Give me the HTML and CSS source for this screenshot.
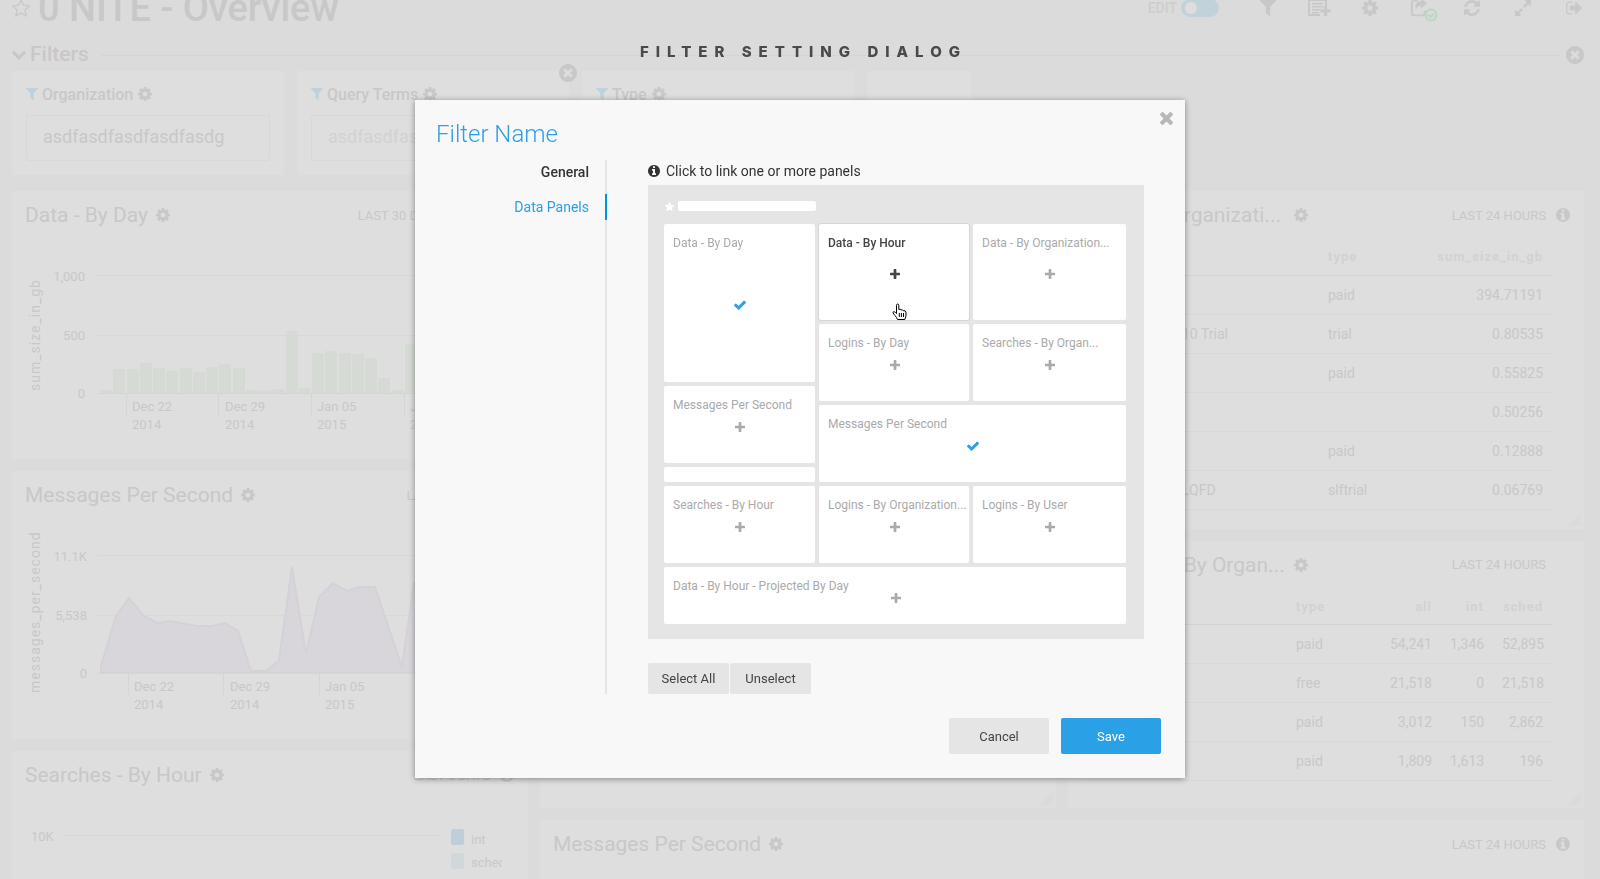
FILE: index.html
```html
<!DOCTYPE html>
<html lang="en">
<head>
  <meta charset="UTF-8" />
  <meta name="viewport" content="width=device-width, initial-scale=1.0"/>
  <title>0 NITE - Overview</title>
  <link rel="stylesheet" href="styles.css">
</head>
<body>

<!-- Icon set -->
<svg class="icon-defs" aria-hidden="true">
  <symbol id="cog" viewBox="0 128 1536 1536"><path d="M1024 896q0-106-75-181t-181-75-181 75-75 181 75 181 181 75 181-75 75-181zm512-109v222q0 12-8 23t-20 13l-185 28q-19 54-39 91 35 50 107 138 10 12 10 25t-9 23q-27 37-99 108t-94 71q-12 0-26-9l-138-108q-44 23-91 38-16 136-29 186-7 28-36 28h-222q-14 0-24.500-8.500t-11.500-21.500l-28-184q-49-16-90-37l-141 107q-10 9-25 9-14 0-25-11-126-114-165-168-7-10-7-23 0-12 8-23 15-21 51-66.500t54-70.500q-27-50-41-99l-183-27q-13-2-21-12.500t-8-23.500v-222q0-12 8-23t19-13l186-28q14-46 39-92-40-57-107-138-10-12-10-24 0-10 9-23 26-36 98.500-107.500t94.500-71.500q13 0 26 10l138 107q44-23 91-38 16-136 29-186 7-28 36-28h222q14 0 24.500 8.500t11.500 21.500l28 184q49 16 90 37l142-107q9-9 24-9 13 0 25 10 129 119 165 170 7 8 7 22 0 12-8 23-15 21-51 66.500t-54 70.500q26 50 41 98l183 28q13 2 21 12.500t8 23.500z"/></symbol>
  <symbol id="plus" viewBox="192 128 1408 1408"><path d="M1600 736v192q0 40-28 68t-68 28h-416v416q0 40-28 68t-68 28h-192q-40 0-68-28t-28-68v-416h-416q-40 0-68-28t-28-68v-192q0-40 28-68t68-28h416v-416q0-40 28-68t68-28h192q40 0 68 28t28 68v416h416q40 0 68 28t28 68z"/></symbol>
  <symbol id="check" viewBox="121 120 1550 1550"><path d="M1671 566q0 40-28 68l-724 724-136 136q-28 28-68 28t-68-28l-136-136-362-362q-28-28-28-68t28-68l136-136q28-28 68-28t68 28l294 295 656-657q28-28 68-28t68 28l136 136q28 28 28 68z"/></symbol>
  <symbol id="times" viewBox="302 366 1188 1188"><path d="M1490 1322q0 40-28 68l-136 136q-28 28-68 28t-68-28l-294-294-294 294q-28 28-68 28t-68-28l-136-136q-28-28-28-68t28-68l294-294-294-294q-28-28-28-68t28-68l136-136q28-28 68-28t68 28l294 294 294-294q28-28 68-28t68 28l136 136q28 28 28 68t-28 68l-294 294 294 294q28 28 28 68z"/></symbol>
  <symbol id="info" viewBox="128 128 1536 1536"><path d="M1152 1376v-160q0-14-9-23t-23-9h-96v-512q0-14-9-23t-23-9h-320q-14 0-23 9t-9 23v160q0 14 9 23t23 9h96v320h-96q-14 0-23 9t-9 23v160q0 14 9 23t23 9h448q14 0 23-9t9-23zm-128-896v-160q0-14-9-23t-23-9h-192q-14 0-23 9t-9 23v160q0 14 9 23t23 9h192q14 0 23-9t9-23zm640 416q0 209-103 385.500t-279.500 279.500-385.500 103-385.500-103-279.500-279.500-103-385.500 103-385.500 279.500-279.500 385.500-103 385.500 103 279.500 279.500 103 385.500z"/></symbol>
  <symbol id="times-circle" viewBox="128 128 1536 1536"><path d="M1277 1122q0-26-19-45l-181-181 181-181q19-19 19-45 0-27-19-46l-90-90q-19-19-46-19-26 0-45 19l-181 181-181-181q-19-19-45-19-27 0-46 19l-90 90q-19 19-19 46 0 26 19 45l181 181-181 181q-19 19-19 45 0 27 19 46l90 90q19 19 46 19 26 0 45-19l181-181 181 181q19 19 45 19 27 0 46-19l90-90q19-19 19-46zm387-226q0 209-103 385.500t-279.500 279.500-385.500 103-385.500-103-279.500-279.500-103-385.500 103-385.500 279.500-279.500 385.500-103 385.500 103 279.500 279.500 103 385.500z"/></symbol>
  <symbol id="filter" viewBox="192 256 1408 1408"><path d="M1595 295q17 41-14 70l-493 493v742q0 42-39 59-13 5-25 5-27 0-45-19l-256-256q-19-19-19-45v-486l-493-493q-31-29-14-70 17-39 59-39h1280q42 0 59 39z"/></symbol>
  <symbol id="chevron" viewBox="90 210 1612 1612"><path d="M1683 808l-742 741q-19 19-45 19t-45-19l-742-741q-19-19-19-45.500t19-45.500l166-165q19-19 45-19t45 19l531 531 531-531q19-19 45-19t45 19l166 165q19 19 19 45.500t-19 45.500z"/></symbol>
  <symbol id="refresh" viewBox="128 128 1536 1536"><path d="M1639 1056q0 5-1 7-64 268-268 434.500t-478 166.500q-146 0-282.500-55t-243.500-157l-129 129q-19 19-45 19t-45-19-19-45v-448q0-26 19-45t45-19h448q26 0 45 19t19 45-19 45l-137 137q71 66 161 102t187 36q134 0 250-65t186-179q11-17 53-117 8-23 30-23h192q13 0 22.500 9.500t9.500 22.500zm25-800v448q0 26-19 45t-45 19h-448q-26 0-45-19t-19-45 19-45l138-138q-148-137-349-137-134 0-250 65t-186 179q-11 17-53 117-8 23-30 23h-199q-13 0-22.500-9.500t-9.500-22.500v-7q65-268 270-434.500t480-166.500q146 0 284 55.500t245 156.500l130-129q19-19 45-19t45 19 19 45z"/></symbol>
  <symbol id="expand" viewBox="128 128 1536 1536"><path d="M883 1056q0 13-10 23l-332 332 144 144q19 19 19 45t-19 45-45 19h-448q-26 0-45-19t-19-45v-448q0-26 19-45t45-19 45 19l144 144 332-332q10-10 23-10t23 10l114 114q10 10 10 23zm781-864v448q0 26-19 45t-45 19-45-19l-144-144-332 332q-10 10-23 10t-23-10l-114-114q-10-10-10-23t10-23l332-332-144-144q-19-19-19-45t19-45 45-19h448q26 0 45 19t19 45z"/></symbol>
  <symbol id="sign-out" viewBox="64 112 1568 1568"><path d="M704 1440q0 4 1 20t.5 26.500-3 23.500-10 19.500-20.500 6.500h-320q-119 0-203.500-84.500t-84.500-203.500v-704q0-119 84.500-203.500t203.500-84.500h320q13 0 22.500 9.500t9.500 22.500q0 4 1 20t.5 26.500-3 23.500-10 19.500-20.500 6.500h-320q-66 0-113 47t-47 113v704q0 66 47 113t113 47h312l11.500 1 11.500 3 8 5.500 7 9 2 13.500zm928-544q0 26-19 45l-544 544q-19 19-45 19t-45-19-19-45v-288h-448q-26 0-45-19t-19-45v-384q0-26 19-45t45-19h448v-288q0-26 19-45t45-19 45 19l544 544q19 19 19 45z"/></symbol>
  <symbol id="star" viewBox="0 0 20 20"><path d="M10 1l2.800 5.900 6.300.9-4.600 4.500 1.200 6.400L10 15.600l-5.700 3.100 1.200-6.400L.9 7.800l6.300-.9z"/></symbol>
  <symbol id="share" viewBox="0 0 24 24"><path d="M9 4H4.500Q2 4 2 6.500v11Q2 20 4.500 20h9q2.500 0 2.500-2.500V15" fill="none" stroke="currentColor" stroke-width="2"/><path d="M12 1.500L18.500 7 12 12.500V9.500q-5 0-5.500 5Q4 5 12 4.500z"/></symbol>
  <symbol id="add-list" viewBox="0 0 24 20"><path d="M13 17H2V2h17v7" fill="none" stroke="currentColor" stroke-width="2"/><path d="M5 5h11v1.500H5zM5 8h11v1.500H5zM5 11h9v1.500H5zM5 14h7v1.500H5zM17 8h3v3.500h3.500v3H20V18h-3v-3.500h-3.500v-3H17z"/></symbol>
  <symbol id="grip" viewBox="0 0 14 14"><path d="M1 13L13 1M5 13l8-8M9 13l4-4" fill="none" stroke="currentColor" stroke-width="1.500"/></symbol>
</svg>

<!-- Dashboard -->
<div class="dashboard">
  <header class="topbar">
    <svg class="icon star-outline"><use href="#star"/></svg>
    <h1>0 NITE - Overview</h1>
    <label class="edit-label" for="edit">EDIT</label>
    <input class="toggle" type="checkbox" id="edit">
    <nav class="tools">
      <button class="tool" aria-label="Filter"><svg class="icon icon-16"><use href="#filter"/></svg></button>
      <button class="tool" aria-label="Add panel"><svg class="icon icon-add"><use href="#add-list"/></svg></button>
      <button class="tool" aria-label="Settings"><svg class="icon icon-16"><use href="#cog"/></svg></button>
      <button class="tool" aria-label="Share">
        <svg class="icon icon-share"><use href="#share"/></svg>
        <svg class="share-ok" viewBox="0 0 14 14"><circle cx="7" cy="7" r="5.500"/><path d="M4 6.500l2.500 2.500L10 5.500"/></svg>
      </button>
      <button class="tool" aria-label="Refresh"><svg class="icon icon-16"><use href="#refresh"/></svg></button>
      <button class="tool" aria-label="Full screen"><svg class="icon icon-16"><use href="#expand"/></svg></button>
      <button class="tool" aria-label="Sign out"><svg class="icon icon-16"><use href="#sign-out"/></svg></button>
    </nav>
  </header>

  <div class="filters-head">
    <svg class="icon icon-14"><use href="#chevron"/></svg>
    <h2>Filters</h2>
    <span class="rule"></span>
    <button class="plain" aria-label="Close filters"><svg class="icon icon-18"><use href="#times-circle"/></svg></button>
  </div>

  <div class="filters">
    <div class="filter-card">
      <label for="organization"><svg class="icon icon-12 blue"><use href="#filter"/></svg>Organization<svg class="icon icon-14"><use href="#cog"/></svg></label>
      <input type="text" id="organization" value="asdfasdfasdfasdfasdg">
    </div>
    <div class="filter-card">
      <label for="terms"><svg class="icon icon-12 blue"><use href="#filter"/></svg>Query Terms<svg class="icon icon-14"><use href="#cog"/></svg></label>
      <input type="text" id="terms" placeholder="asdfasdfasdfasdfasdg">
      <button class="plain remove" aria-label="Remove filter"><svg class="icon icon-18"><use href="#times-circle"/></svg></button>
    </div>
    <div class="filter-card">
      <label for="type"><svg class="icon icon-12 blue"><use href="#filter"/></svg>Type<svg class="icon icon-14"><use href="#cog"/></svg></label>
      <input type="text" id="type">
    </div>
    <div class="filter-card small"></div>
  </div>

  <main class="board">
    <div class="column">
      <section class="card">
        <div class="card-head">
          <h3>Data - By Day</h3>
          <svg class="icon icon-14"><use href="#cog"/></svg>
          <span class="range">LAST 30 DAYS, BY DAY</span>
          <svg class="icon icon-14"><use href="#info"/></svg>
        </div>
        <svg class="chart">
          <path class="grid-line" d="M85 34.500H504M85 94.500H504"/>
          <g class="bars">
            <rect x="88" y="149" width="12" height="3"/><rect x="101" y="128" width="12" height="24"/>
            <rect x="115" y="128" width="12" height="24"/><rect x="128" y="122" width="12" height="30"/>
            <rect x="141" y="127" width="12" height="25"/><rect x="154" y="130" width="12" height="22"/>
            <rect x="168" y="127" width="12" height="25"/><rect x="181" y="131" width="12" height="21"/>
            <rect x="194" y="126" width="12" height="26"/><rect x="207" y="123" width="12" height="29"/>
            <rect x="221" y="127" width="12" height="25"/><rect x="234" y="149" width="12" height="3"/>
            <rect x="247" y="149" width="12" height="3"/><rect x="260" y="148" width="12" height="4"/>
            <rect x="274" y="90" width="12" height="62"/><rect x="287" y="147" width="12" height="5"/>
            <rect x="300" y="112" width="12" height="40"/><rect x="313" y="110" width="12" height="42"/>
            <rect x="327" y="112" width="12" height="40"/><rect x="340" y="113" width="12" height="39"/>
            <rect x="353" y="117" width="12" height="35"/><rect x="366" y="137" width="12" height="15"/>
            <rect x="380" y="149" width="12" height="3"/><rect x="393" y="103" width="12" height="49"/>
          </g>
          <path class="axis-line" d="M85 152.500H504M114.500 152V175M206.500 152V175M299.500 152V175M392.500 152V175"/>
          <g class="y-labels"><text x="73" y="40">1,000</text><text x="73" y="99">500</text><text x="73" y="157">0</text></g>
          <text x="120" y="170">Dec 22</text><text x="120" y="188">2014</text>
          <text x="213" y="170">Dec 29</text><text x="213" y="188">2014</text>
          <text x="305" y="170">Jan 05</text><text x="305" y="188">2015</text>
          <text x="398" y="170">Jan 12</text><text x="398" y="188">2015</text>
          <text class="axis-title" transform="translate(28 150) rotate(-90)">sum_size_in_gb</text>
        </svg>
      </section>

      <section class="card">
        <div class="card-head">
          <h3>Messages Per Second</h3>
          <svg class="icon icon-14"><use href="#cog"/></svg>
          <span class="range">LAST 30 DAYS</span>
          <svg class="icon icon-14"><use href="#info"/></svg>
        </div>
        <svg class="chart">
          <path class="grid-line" d="M86 34.500H504M86 94.500H504"/>
          <path class="area" d="M89 152V145L104 95 117 77 131 94 145 102 158 100 185 105H200L213 102 226 110 239 150H254L267 139 280 46 294 133 307 76 321 62 335 70 347 66H363L376 105 390 146 402 62 416 60V152z"/>
          <path class="axis-line" d="M86 152.500H504M116.500 152V175M211.500 152V175M307.500 152V175"/>
          <g class="y-labels"><text x="75" y="40">11.1K</text><text x="75" y="99">5,538</text><text x="75" y="157">0</text></g>
          <text x="122" y="170">Dec 22</text><text x="122" y="188">2014</text>
          <text x="218" y="170">Dec 29</text><text x="218" y="188">2014</text>
          <text x="313" y="170">Jan 05</text><text x="313" y="188">2015</text>
          <text class="axis-title" transform="translate(28 172) rotate(-90)">messages_per_second</text>
        </svg>
      </section>

      <section class="card">
        <div class="card-head">
          <h3>Searches - By Hour</h3>
          <svg class="icon icon-14"><use href="#cog"/></svg>
          <span class="range">LAST 5 DAYS</span>
          <svg class="icon icon-14"><use href="#info"/></svg>
        </div>
        <svg class="chart">
          <text x="19" y="40">10K</text>
          <path class="grid-line" d="M53 34.500H429"/>
          <rect class="key-int" x="439" y="28" width="13" height="16" rx="2"/>
          <rect class="key-sched" x="439" y="52" width="13" height="16" rx="2"/>
          <text x="459" y="43">int</text>
          <svg x="459" y="50" width="31" height="22"><text x="0" y="16">sched</text></svg>
        </svg>
      </section>
    </div>

    <div class="wide">
      <section class="card middle">
        <svg class="grip"><use href="#grip"/></svg>
      </section>

      <div class="column">
        <section class="card">
          <div class="card-head">
            <h3 class="fill">Data - By Organizati...</h3>
            <svg class="icon icon-14"><use href="#cog"/></svg>
            <span class="range">LAST 24 HOURS</span>
            <svg class="icon icon-14"><use href="#info"/></svg>
          </div>
          <table>
            <colgroup><col><col class="c-type"><col class="c-size"></colgroup>
            <tr><th></th><th>type</th><th class="num">sum_size_in_gb</th></tr>
            <tr><td></td><td>paid</td><td class="num">394.71191</td></tr>
            <tr><td class="name">10 Trial</td><td>trial</td><td class="num">0.80535</td></tr>
            <tr><td></td><td>paid</td><td class="num">0.55825</td></tr>
            <tr><td></td><td></td><td class="num">0.50256</td></tr>
            <tr><td></td><td>paid</td><td class="num">0.12888</td></tr>
            <tr><td class="name">LQFD</td><td>slftrial</td><td class="num">0.06769</td></tr>
          </table>
          <svg class="grip"><use href="#grip"/></svg>
        </section>

        <section class="card grow">
          <div class="card-head">
            <h3 class="fill">Searches - By Organ...</h3>
            <svg class="icon icon-14"><use href="#cog"/></svg>
            <span class="range">LAST 24 HOURS</span>
            <span class="no-icon"></span>
          </div>
          <table>
            <colgroup><col><col class="c-kind"><col class="c-all"><col class="c-int"><col class="c-sched"></colgroup>
            <tr><th></th><th>type</th><th class="num">all</th><th class="num">int</th><th class="num">sched</th></tr>
            <tr><td></td><td>paid</td><td class="num">54,241</td><td class="num">1,346</td><td class="num">52,895</td></tr>
            <tr><td></td><td>free</td><td class="num">21,518</td><td class="num">0</td><td class="num">21,518</td></tr>
            <tr><td></td><td>paid</td><td class="num">3,012</td><td class="num">150</td><td class="num">2,862</td></tr>
            <tr><td></td><td>paid</td><td class="num">1,809</td><td class="num">1,613</td><td class="num">196</td></tr>
          </table>
          <svg class="grip"><use href="#grip"/></svg>
        </section>
      </div>

      <section class="card bottom">
        <div class="card-head">
          <h3>Messages Per Second</h3>
          <svg class="icon icon-14"><use href="#cog"/></svg>
          <span class="range">LAST 24 HOURS</span>
          <svg class="icon icon-14"><use href="#info"/></svg>
        </div>
      </section>
    </div>
  </main>
</div>

<!-- Filter dialog -->
<div class="overlay">
  <p class="caption">FILTER SETTING DIALOG</p>
  <div class="dialog" role="dialog" aria-labelledby="dialog-title">
    <header class="dialog-head">
      <h2 id="dialog-title">Filter Name</h2>
      <button class="plain close" aria-label="Close"><svg class="icon icon-13"><use href="#times"/></svg></button>
    </header>

    <div class="dialog-body">
      <nav class="tabs">
        <a href="#general">General</a>
        <a href="#panels" class="active">Data Panels</a>
      </nav>

      <div class="content">
        <p class="hint"><svg class="icon icon-12"><use href="#info"/></svg>Click to link one or more panels</p>

        <div class="map">
          <div class="map-title"><svg class="icon icon-11"><use href="#star"/></svg><span></span></div>
          <div class="tiles">
            <div class="stack">
              <button class="tile linked"><span>Data - By Day</span><svg class="icon icon-12"><use href="#check"/></svg></button>
              <button class="tile"><span>Messages Per Second</span><svg class="icon icon-10"><use href="#plus"/></svg></button>
              <div class="tile"></div>
            </div>
            <div class="tiles-right">
              <button class="tile hover"><span>Data - By Hour</span><svg class="icon icon-10"><use href="#plus"/></svg>
                <svg class="pointer" viewBox="0 0 16 18">
                  <path d="M5.500 16.500C4.500 13.500 1.500 11.500 1 9.500 1 8.300 2.500 8.200 4.500 10.500V2.500Q4.500 1 5.600 1 6.800 1 6.800 2.500V6.500Q8.500 5.800 9 7 10.700 6.300 11.200 7.700 13.500 7.200 14 9V12Q14 14 12.800 16.500z"/>
                  <path d="M7.300 10v4M9.400 10v4M11.500 10v4"/>
                </svg>
              </button>
              <button class="tile"><span>Data - By Organization...</span><svg class="icon icon-10"><use href="#plus"/></svg></button>
              <button class="tile"><span>Logins - By Day</span><svg class="icon icon-10"><use href="#plus"/></svg></button>
              <button class="tile"><span>Searches - By Organ...</span><svg class="icon icon-10"><use href="#plus"/></svg></button>
              <button class="tile linked span-2"><span>Messages Per Second</span><svg class="icon icon-12"><use href="#check"/></svg></button>
            </div>
            <button class="tile"><span>Searches - By Hour</span><svg class="icon icon-10"><use href="#plus"/></svg></button>
            <button class="tile"><span>Logins - By Organization...</span><svg class="icon icon-10"><use href="#plus"/></svg></button>
            <button class="tile"><span>Logins - By User</span><svg class="icon icon-10"><use href="#plus"/></svg></button>
            <button class="tile span-3"><span>Data - By Hour - Projected By Day</span><svg class="icon icon-10"><use href="#plus"/></svg></button>
          </div>
        </div>

        <div class="selects">
          <button class="btn">Select All</button>
          <button class="btn">Unselect</button>
        </div>
      </div>
    </div>

    <footer class="dialog-foot">
      <button class="btn big">Cancel</button>
      <button class="btn big primary">Save</button>
    </footer>
  </div>
</div>

</body>
</html>
```
FILE: styles.css
```css
* {
  margin: 0;
  padding: 0;
  box-sizing: border-box;
}

body {
  font-family: Roboto, Arial, sans-serif;
  font-size: 14px;
  color: #c8c8c8;
  background: #dbdbdb;
  height: 100vh;
  overflow: hidden;
}

h1, h2, h3 { font-weight: 500; }

button, input {
  font: inherit;
  color: inherit;
  border: none;
  background: none;
}

button { cursor: pointer; }

/* Icons */
.icon-defs { display: none; }

.icon {
  flex: none;
  display: block;
  fill: currentColor;
}

.icon-10 { width: 10px; height: 10px; }
.icon-11 { width: 11px; height: 11px; }
.icon-12 { width: 12px; height: 12px; }
.icon-13 { width: 13px; height: 13px; }
.icon-14 { width: 14px; height: 14px; }
.icon-16 { width: 16px; height: 16px; }
.icon-18 { width: 18px; height: 18px; }
.icon-add { width: 24px; height: 20px; }
.icon-share { width: 22px; height: 22px; }
.blue { color: #bed2dd; }

/* Dashboard */
.dashboard {
  height: 100%;
  padding: 0 16px 0 12px;
  overflow: hidden;
}

.topbar {
  display: flex;
  align-items: center;
  height: 40px;
  margin-top: -12px;
}

.star-outline {
  width: 18px;
  height: 18px;
  margin-right: 8px;
  fill: none;
  stroke: currentColor;
  stroke-width: 1.5;
}

h1 {
  flex: 1;
  font-size: 38px;
  white-space: nowrap;
}

.edit-label {
  font-weight: 500;
  color: #cdcdcd;
}

.toggle {
  appearance: none;
  width: 38px;
  height: 18px;
  margin: 0 25px 0 4px;
  border-radius: 9px;
  background: #c2d2db;
}

.toggle::before {
  content: "";
  display: block;
  width: 12px;
  height: 12px;
  margin: 3px 4px;
  border-radius: 50%;
  background: #dedede;
}

.tools {
  display: flex;
  gap: 3px;
  margin-right: -14px;
}

.tool {
  position: relative;
  display: flex;
  align-items: center;
  justify-content: center;
  width: 48px;
  height: 30px;
}

.share-ok {
  position: absolute;
  left: 27px;
  top: 15px;
  width: 14px;
  height: 14px;
  fill: #dbdbdb;
  stroke: #bcd6bf;
  stroke-width: 2;
}

.filters-head {
  display: flex;
  align-items: center;
  height: 30px;
  margin-top: 12px;
}

.filters-head h2 {
  margin: 0 12px 0 4px;
  padding-bottom: 2px;
  font-size: 21px;
  line-height: 24px;
}

.rule {
  flex: 1;
  height: 1px;
  margin-right: 6px;
  background: #d4d4d4;
}

.plain { display: block; }

.filters {
  display: flex;
  gap: 13px;
  margin-top: 1px;
}

.filter-card {
  position: relative;
  width: 272px;
  height: 104px;
  padding: 13px 14px 0;
  background: #dedede;
}

.filter-card.small { width: 104px; }

.filter-card label {
  display: flex;
  align-items: center;
  gap: 4px;
  height: 20px;
  font-size: 16px;
  font-weight: 500;
}

.filter-card label .icon-14 { margin-left: 1px; }

.filter-card input {
  width: 100%;
  height: 46px;
  margin-top: 11px;
  padding: 0 16px 3px;
  border: 1px solid #d8d8d8;
  border-radius: 2px;
  font-size: 18px;
}

.filter-card input::placeholder { color: #d2d2d2; }

.remove {
  position: absolute;
  top: -7px;
  right: -8px;
}

/* Panels */
.board {
  display: grid;
  grid-template-columns: calc((100% - 24px) / 3) minmax(0, 1fr);
  gap: 12px;
  margin-top: 16px;
}

.column {
  display: flex;
  flex-direction: column;
  gap: 12px;
}

.wide {
  display: grid;
  grid-template-columns: 1fr 1fr;
  gap: 12px;
  align-content: start;
}

.card {
  position: relative;
  background: #dedede;
}

.card.middle { min-height: 617px; }
.card.grow { flex: 1; }

.card-head {
  display: flex;
  align-items: center;
  height: 48px;
  padding: 0 14px 0 13px;
}

.card-head h3 {
  margin-right: 8px;
  font-size: 21px;
  font-weight: 400;
  white-space: nowrap;
}

.card-head .fill {
  width: 200px;
  margin-right: 13px;
  text-align: right;
}

.range {
  margin: 0 10px 0 auto;
  font-size: 13px;
}

.no-icon { width: 14px; }

.chart {
  display: block;
  width: 100%;
  height: 218px;
  margin-top: 2px;
  fill: currentColor;
  font-size: 13px;
}

.y-labels { text-anchor: end; }
.grid-line { stroke: #d8d8d8; }
.axis-line { stroke: #d3d6d8; }
.bars { fill: #d5dbd4; }

.area {
  fill: #d8d6da;
  stroke: #d4d1d7;
  stroke-width: 2;
}

.axis-title {
  font-size: 14px;
  letter-spacing: 1px;
}

.key-int { fill: #bfced8; }
.key-sched { fill: #d1d8da; }

table {
  width: calc(100% - 48px);
  margin: 0 32px 19px 16px;
  border-collapse: collapse;
  table-layout: fixed;
}

th, td {
  height: 39px;
  padding: 0 9px;
  border-bottom: 1px solid #d8d8d8;
  text-align: left;
  white-space: nowrap;
}

th {
  height: 36px;
  font-size: 13px;
  font-weight: 700;
  letter-spacing: 1px;
  color: #d2d2d2;
  border-color: #d2d2d2;
}

.num { text-align: right; }
.name { padding-left: 98px; }
.c-type { width: 92px; }
.c-size { width: 141px; }
.c-kind { width: 80px; }
.c-all { width: 74px; }
.c-int { width: 52px; }
.c-sched { width: 59px; }

.grip {
  position: absolute;
  right: 2px;
  bottom: 2px;
  width: 14px;
  height: 14px;
  color: #d8d8d8;
}

.bottom {
  grid-column: span 2;
  height: 268px;
}

/* Dialog */
.overlay {
  position: fixed;
  top: 0; left: 0;
  width: 100%;
  height: 100%;
  display: flex;
  flex-direction: column;
  align-items: center;
}

.caption {
  height: 100px;
  padding: 40px 0 0 7px;
  font-family: Inter, sans-serif;
  font-size: 15px;
  font-weight: 800;
  line-height: 23px;
  letter-spacing: 7px;
  color: #4a4a4a;
}

.dialog {
  width: 100%;
  max-width: 770px;
  padding: 20px 24px 24px 21px;
  background: #f8f8f8;
  box-shadow: 0 1px 6px rgba(0, 0, 0, 0.4);
  color: #444;
}

.dialog-head {
  display: flex;
  justify-content: space-between;
  align-items: flex-start;
}

.dialog-head h2 {
  font-size: 24px;
  font-weight: 300;
  line-height: 28px;
  color: #2aa0e6;
}

.close {
  margin: -8px -12px 0 0;
  color: #b8b8b8;
}

.dialog-body {
  display: flex;
  margin-top: 12px;
}

.tabs {
  display: flex;
  flex-direction: column;
  gap: 10px;
  width: 171px;
  border-right: 2px solid #e5e5e5;
  text-align: right;
}

.tabs a {
  margin-right: -2px;
  padding-right: 16px;
  border-right: 2px solid transparent;
  font-weight: 500;
  line-height: 24px;
  color: #333;
  text-decoration: none;
}

.tabs a.active {
  border-color: #0095da;
  font-weight: 400;
  line-height: 26px;
  color: #2aa0e6;
}

.content {
  flex: 1;
  padding: 0 17px 0 41px;
}

.hint {
  display: flex;
  align-items: center;
  gap: 6px;
  height: 25px;
  padding-bottom: 3px;
  color: #333;
}

.map {
  padding: 16px 18px 15px 16px;
  background: #e5e5e5;
}

.map-title {
  display: flex;
  align-items: center;
  gap: 3px;
  height: 10px;
  margin-bottom: 13px;
  color: #fff;
}

.map-title span {
  width: 138px;
  height: 10px;
  border-radius: 2px;
  background: #fff;
}

.tiles {
  display: grid;
  grid-template-columns: minmax(0, 151fr) minmax(0, 150fr) minmax(0, 153fr);
  grid-template-rows: 258px 77px 57px;
  gap: 4px;
}

.stack {
  display: grid;
  grid-template-rows: 158px 77px 15px;
  gap: 4px;
}

.tiles-right {
  grid-column: span 2;
  display: grid;
  grid-template-columns: minmax(0, 150fr) minmax(0, 153fr);
  grid-template-rows: 96px 77px 77px;
  gap: 4px;
}

/* label and icon share one cell */
.tile {
  position: relative;
  display: grid;
  grid-template: 100% / 100%;
  padding: 4px 0 0 9px;
  border-radius: 2px;
  background: #fff;
  color: #aaa;
  font-size: 12px;
}

.tile span {
  grid-area: 1 / 1;
  justify-self: start;
  align-self: start;
  padding-top: 7px;
  line-height: 16px;
  white-space: nowrap;
}

.tile .icon {
  grid-area: 1 / 1;
  place-self: center;
  margin-left: -8px;
}

.tile.linked .icon { color: #2aa0e6; }

.tile.hover {
  box-shadow: 0 0 0 1px #d6d6d6;
  color: #444;
  font-weight: 500;
}

.span-2 { grid-column: span 2; }
.span-3 { grid-column: span 3; }

.pointer {
  position: absolute;
  left: 73px;
  bottom: -1px;
  width: 16px;
  height: 18px;
  fill: #fff;
  stroke: #000;
}

.selects {
  display: flex;
  gap: 1px;
  margin-top: 24px;
}

.btn {
  width: 81px;
  height: 31px;
  border-radius: 2px;
  background: #e5e5e5;
  font-size: 13px;
  color: #444;
}

.btn.big {
  width: 100px;
  height: 36px;
}

.btn.primary {
  background: #2aa0e6;
  color: #fff;
}

.dialog-foot {
  display: flex;
  justify-content: flex-end;
  gap: 12px;
  margin-top: 24px;
}
```
